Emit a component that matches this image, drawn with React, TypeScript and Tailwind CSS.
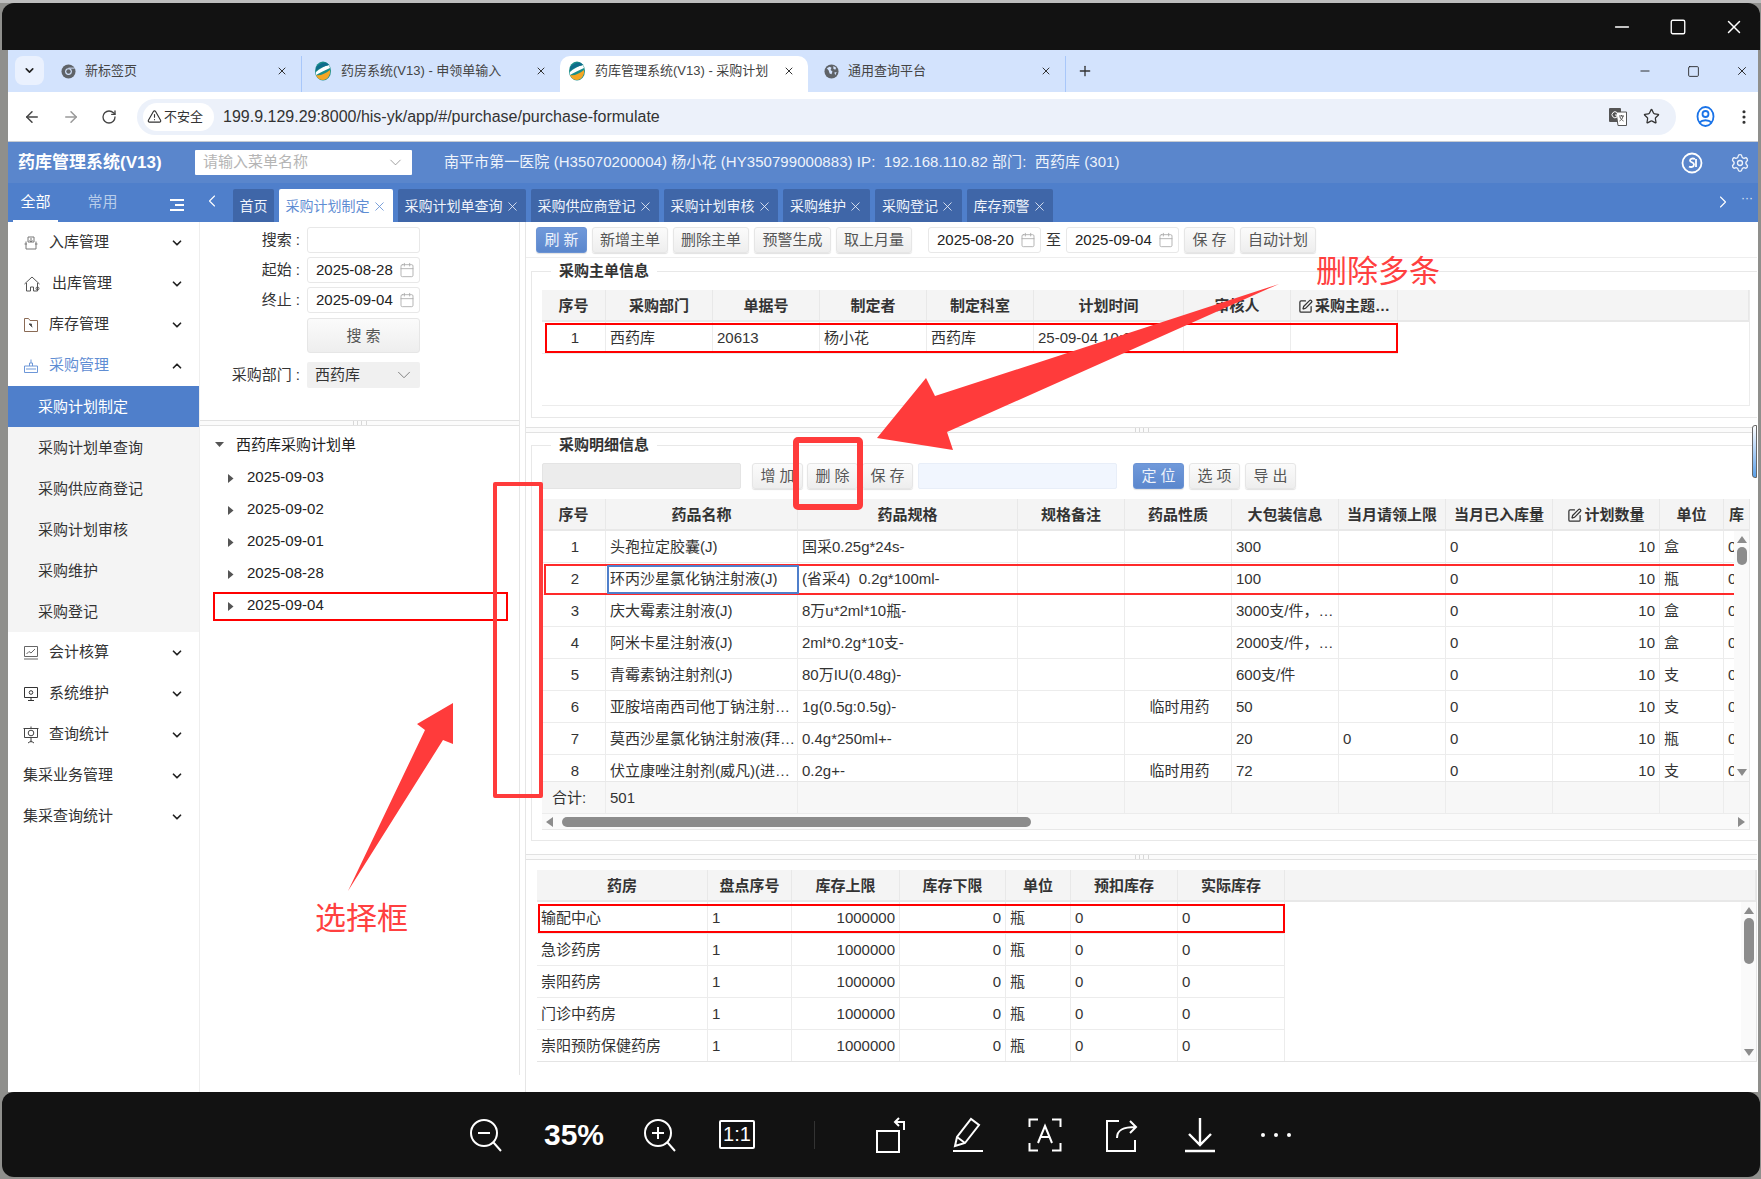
import React from "react";
import {
  ArrowLeft, ArrowRight, RotateCw, TriangleAlert, Star, EllipsisVertical, ChevronDown, ChevronUp,
  ChevronLeft, ChevronRight, Settings, Calendar, SquarePen, X, Plus, Minus, Square,
} from "lucide-react";

const Cal = () => <Calendar size={16} strokeWidth={1.3} className="text-[#aaa] shrink-0" />;

function ChromeIcon() {
  return (
    <svg width="15" height="15" viewBox="0 0 16 16" className="shrink-0">
      <circle cx="8" cy="8" r="7.5" fill="#5f6368" />
      <circle cx="8" cy="8" r="3.6" fill="#d3e3fd" />
      <circle cx="8" cy="8" r="2.4" fill="#5f6368" />
      <path d="M8 4.4h6.6" stroke="#d3e3fd" strokeWidth="1" />
    </svg>
  );
}
function GlobeIcon() {
  return (
    <svg width="15" height="15" viewBox="0 0 16 16" className="shrink-0">
      <circle cx="8" cy="8" r="7.5" fill="#5f6368" />
      <path d="M3 4.5l3-1.5 2 1-1 2.5 2 1.5-1 3-2-1-1-3zM10 2l3 2-1 2-2-1zM11 9l2.5-.5-1.5 3.500z" fill="#d3e3fd" />
    </svg>
  );
}
function AppLogo() {
  return (
    <svg width="18" height="20" viewBox="0 0 18 20" className="shrink-0">
      <ellipse cx="9" cy="10" rx="8" ry="9.500" fill="#1b8e8a" />
      <path d="M2 14c4 1 9-1 14-5 1 5-3 10-7 10-3 0-6-2-7-5z" fill="#f5a623" />
      <path d="M2 11C5 8 11 5 15 4l1 3C11 9 6 12 2 14z" fill="#fff" />
      <path d="M2 7c2-4 7-6 11-5l2 2C10 5 5 7 2 10z" fill="#0f6d8c" />
    </svg>
  );
}

function Btn({ children, blue, w = "w-[51px]" }: { children: React.ReactNode; blue?: boolean; w?: string }) {
  return (
    <div
      className={`${w} h-[26px] shrink-0 rounded-[3px] border text-center leading-[24px] shadow-[0_1px_1px_rgba(0,0,0,0.12)] ${
        blue
          ? "bg-gradient-to-b from-[#7099da] to-[#5b87cd] border-[#6b93d4] text-[#eef3fb]"
          : "bg-gradient-to-b from-[#fbfbfb] to-[#eeeeee] border-[#e6e6e6] text-[#555]"
      }`}
    >
      {children}
    </div>
  );
}

function DateBox({ v, w = "w-[113px]" }: { v: string; w?: string }) {
  return (
    <div className={`${w} h-[26px] shrink-0 flex items-center justify-between pl-[8px] pr-[4px] border border-[#e8e8e8] rounded-[3px] text-[#222] bg-white`}>
      <span>{v}</span>
      <Cal />
    </div>
  );
}

function Divider() {
  return (
    <div className="h-[6px] border-y border-[#e2e2e2] bg-[#fbfbfb] flex justify-center">
      <div className="w-[14px] h-full border-x border-[#d8d8d8] flex justify-center">
        <div className="w-[5px] h-full border-x border-[#d8d8d8]" />
      </div>
    </div>
  );
}

/* ------ sidebar ------ */
const G = "#777";
const iconIn = (
  <svg width="16" height="16" viewBox="0 0 16 16" fill="none" stroke={G}>
    <path d="M3 6.500v7.500h10V6.500M5 2h6v5H5zM1.500 9H4M12 9h2.500M8 3v4M6.500 5.500 8 7l1.500-1.500" />
  </svg>
);
const iconOut = (
  <svg width="18" height="18" viewBox="0 0 18 18" fill="none" stroke="#555">
    <path d="M1.500 9 9 2l7.500 7M3.500 8v8h4v-4h3v4h4V8" />
    <circle cx="14.500" cy="13.500" r="1.500" />
  </svg>
);
const iconStock = (
  <svg width="16" height="16" viewBox="0 0 16 16" fill="none" stroke="#555">
    <path d="M1.500 1.500h4l1.500 2h7.500v11h-13z" stroke="#8a6a55" />
    <path d="M6 7l3.500 3M6 7h2.500v2.500z" fill="#333" />
  </svg>
);
const iconBuy = (
  <svg width="16" height="16" viewBox="0 0 16 16" fill="none" stroke="#6d97d8">
    <path d="M1.500 8h13v6.500h-13zM3 11h10M6.500 8V5h3v3M8 5V1.500" />
  </svg>
);
const iconAcc = (
  <svg width="16" height="16" viewBox="0 0 16 16" fill="none" stroke="#666">
    <path d="M1.500 1.500h13v10h-13zM1 14h14M3.500 9 6 6.500l2 1.500 4-4" />
  </svg>
);
const iconSys = (
  <svg width="16" height="16" viewBox="0 0 16 16" fill="none" stroke="#333">
    <path d="M1.500 1.500h13v10h-13zM5 14.500h6M8 11.500v3" />
    <circle cx="8" cy="6.500" r="1.800" />
  </svg>
);
const iconQry = (
  <svg width="16" height="18" viewBox="0 0 16 18" fill="none" stroke="#444">
    <path d="M.5 2.500h15M1.500 2.500v9h13v-9M8 .5v2M8 11.500v5M5 17l3-2 3 2" />
    <circle cx="8" cy="7" r="2.800" />
  </svg>
);

function MenuRow({ icon, label, open, blue, tx = "w-[19px]" }: { icon?: React.ReactNode; label: string; open?: boolean; blue?: boolean; tx?: string }) {
  return (
    <div className={`h-[41px] flex items-center pl-[15px] pr-[15px] ${blue ? "text-[#5f8dd3]" : "text-[#333]"}`}>
      {icon && <div className={`${tx} shrink-0`}>{icon}</div>}
      {icon && <div className="w-[7px] shrink-0" />}
      <span className="flex-1">{label}</span>
      {open ? <ChevronUp size={14} strokeWidth={3} className="text-[#222]" /> : <ChevronDown size={14} strokeWidth={3} className="text-[#222]" />}
    </div>
  );
}

function Sidebar() {
  const subs = ["采购计划单查询", "采购供应商登记", "采购计划审核", "采购维护", "采购登记"];
  return (
    <div className="w-[192px] shrink-0 border-r border-[#eeeeee] bg-white">
      <MenuRow icon={iconIn} label="入库管理" />
      <MenuRow icon={iconOut} label="出库管理" tx="w-[22px]" />
      <MenuRow icon={iconStock} label="库存管理" />
      <MenuRow icon={iconBuy} label="采购管理" open blue />
      <div className="h-[41px] pl-[30px] leading-[41px] bg-[#4f7fcb] text-white">采购计划制定</div>
      <div className="bg-[#f4f4f4]">
        {subs.map((s) => (
          <div key={s} className="h-[41px] pl-[30px] leading-[41px] text-[#333]">{s}</div>
        ))}
      </div>
      <MenuRow icon={iconAcc} label="会计核算" />
      <MenuRow icon={iconSys} label="系统维护" />
      <MenuRow icon={iconQry} label="查询统计" />
      <MenuRow label="集采业务管理" />
      <MenuRow label="集采查询统计" />
    </div>
  );
}

/* ------ middle ------ */
function FormRow({ label, children }: { label: string; children: React.ReactNode }) {
  return (
    <div className="flex items-center h-[26px]">
      <div className="w-[100px] text-right text-[#333] shrink-0">{label}</div>
      <div className="ml-[7px]">{children}</div>
    </div>
  );
}
function TreeRow({ date }: { date: string }) {
  return (
    <div className="h-[32px] flex items-center pl-[28px]">
      <svg width="6" height="9" viewBox="0 0 6 9" className="shrink-0 mt-[2px]"><path d="M0 0l5.500 4.500L0 9z" fill="#555" /></svg>
      <span className="ml-[13px] text-[#222]">{date}</span>
    </div>
  );
}
function Middle() {
  return (
    <div className="w-[320px] shrink-0 border-r border-[#e6e6e6] h-[853px] flex flex-col">
      <div className="h-[198px] pt-[5px] flex flex-col gap-[4px]">
        <FormRow label="搜索 :"><div className="w-[113px] h-[26px] border border-[#e8e8e8] rounded-[3px]" /></FormRow>
        <FormRow label="起始 :"><DateBox v="2025-08-28" /></FormRow>
        <FormRow label="终止 :"><DateBox v="2025-09-04" /></FormRow>
        <div className="pl-[107px] pt-[1px]">
          <div className="w-[113px] h-[35px] rounded-[3px] border border-[#e6e6e6] bg-gradient-to-b from-[#fbfbfb] to-[#eeeeee] text-center leading-[33px] text-[#555]">搜 索</div>
        </div>
        <div className="mt-[5px]">
          <FormRow label="采购部门 :">
            <div className="w-[113px] h-[26px] bg-[#f0f0f0] rounded-[2px] flex items-center justify-between pl-[8px] pr-[5px] text-[#333]">
              <span>西药库</span>
              <ChevronDown size={22} strokeWidth={1} className="text-[#777]" />
            </div>
          </FormRow>
        </div>
      </div>
      <Divider />
      <div className="pt-[3px]">
        <div className="h-[32px] flex items-center pl-[15px]">
          <svg width="9" height="6" viewBox="0 0 9 6" className="shrink-0"><path d="M0 0h9L4.500 5z" fill="#555" /></svg>
          <span className="ml-[12px] text-[#222]">西药库采购计划单</span>
        </div>
        {["2025-09-03", "2025-09-02", "2025-09-01", "2025-08-28", "2025-09-04"].map((d) => (
          <TreeRow key={d} date={d} />
        ))}
      </div>
    </div>
  );
}

/* ------ tables ------ */
const C = "text-center pr-[1px]";
const L = "pr-[1px]";
const R = "text-right pr-[4px]";
const cell = "truncate h-[32px] leading-[31px] pl-[4px] border-r border-b border-[#ececec] text-[#333]";
const head = "truncate h-[32px] leading-[31px] px-[2px] border-r border-b-2 border-[#e8e8e8] text-center font-bold text-[#333] bg-[#f4f4f4]";

function Head({ cols }: { cols: React.ReactNode[] }) {
  return <>{cols.map((c, i) => <div key={i} className={head}>{c}</div>)}</>;
}
function Row({ vals, al }: { vals: string[]; al: string[] }) {
  return <>{vals.map((v, i) => <div key={i} className={`${cell} ${al[i]}`}>{v}</div>)}</>;
}
const Edit = () => <SquarePen size={15} strokeWidth={2} className="inline-block mr-[2px] -mt-[2px]" />;

const t2 = [
  ["1", "头孢拉定胶囊(J)", "国采0.25g*24s-", "", "", "300", "", "0", "10", "盒", "0"],
  ["2", "环丙沙星氯化钠注射液(J)", "(省采4)\u00a0\u00a00.2g*100ml-", "", "", "100", "", "0", "10", "瓶", "0"],
  ["3", "庆大霉素注射液(J)", "8万u*2ml*10瓶-", "", "", "3000支/件，…", "", "0", "10", "盒", "0"],
  ["4", "阿米卡星注射液(J)", "2ml*0.2g*10支-", "", "", "2000支/件，…", "", "0", "10", "盒", "0"],
  ["5", "青霉素钠注射剂(J)", "80万IU(0.48g)-", "", "", "600支/件", "", "0", "10", "支", "0"],
  ["6", "亚胺培南西司他丁钠注射…", "1g(0.5g:0.5g)-", "", "临时用药", "50", "", "0", "10", "支", "0"],
  ["7", "莫西沙星氯化钠注射液(拜…", "0.4g*250ml+-", "", "", "20", "0", "0", "10", "瓶", "0"],
  ["8", "伏立康唑注射剂(威凡)(进…", "0.2g+-", "", "临时用药", "72", "", "0", "10", "支", "0"],
];
const t2al = [C, L, L, L, C, L, L, L, R, L, L];
const t3 = ["输配中心", "急诊药房", "崇阳药房", "门诊中药房", "崇阳预防保健药房"];
const t3al = [L, L, R, R, L, L, L];

function VBar({ pos, thumb }: { pos: string; thumb: string }) {
  return (
    <div className={`absolute top-0 bottom-0 ${pos} w-[15px] bg-[#fafafa] flex flex-col items-center`}>
      <svg width="10" height="7" viewBox="0 0 10 7" className="mt-[5px] shrink-0"><path d="M0 7 5 0l5 7z" fill="#8c8c8c" /></svg>
      <div className={`w-[10px] mt-[4px] rounded-[5px] bg-[#8c8c8c] ${thumb}`} />
      <svg width="10" height="7" viewBox="0 0 10 7" className="mt-auto mb-[5px] shrink-0"><path d="M0 0l5 7 5-7z" fill="#8c8c8c" /></svg>
    </div>
  );
}

function Right() {
  return (
    <div className="w-[1232px] shrink-0 ml-[5px] border-l border-[#e6e6e6] h-[870px] overflow-hidden">
      <div className="h-[36px] pt-[5px] pl-[10px] flex items-start border-b border-[#eeeeee] gap-[5px]">
        <Btn blue>刷 新</Btn>
        <Btn w="w-[76px]">新增主单</Btn>
        <Btn w="w-[76px]">删除主单</Btn>
        <Btn w="w-[77px]">预警生成</Btn>
        <Btn w="w-[76px]">取上月量</Btn>
        <div className="ml-[11px]"><DateBox v="2025-08-20" /></div>
        <span className="text-[#333] leading-[26px]">至</span>
        <DateBox v="2025-09-04" />
        <Btn>保 存</Btn>
        <Btn w="w-[76px]">自动计划</Btn>
      </div>

      <fieldset className="ml-[5px] mt-[2px] w-[1227px] h-[158px] border border-r-0 border-[#e8e8e8] pl-[10px]">
        <legend className="ml-[9px] px-[8px] font-bold text-[#333] leading-[22px]">采购主单信息</legend>
        <div className="mt-[8px] w-[1208px] h-[116px] border-b border-r border-[#ececec]">
          <div className="grid grid-cols-[64px_107px_107px_107px_107px_150px_107px_107px_1fr]">
            <Head cols={["序号", "采购部门", "单据号", "制定者", "制定科室", "计划时间", "审核人", <span key="e"><Edit />采购主题…</span>, ""]} />
            <Row vals={["1", "西药库", "20613", "杨小花", "西药库", "25-09-04 10:00", "", ""]} al={[C, L, L, L, L, L, L, L]} />
          </div>
        </div>
      </fieldset>

      <div className="mt-[9px]"><Divider /></div>

      <fieldset className="ml-[5px] mt-[1px] w-[1227px] h-[407px] border border-r-0 border-[#e8e8e8] pl-[10px]">
        <legend className="ml-[9px] px-[8px] font-bold text-[#333] leading-[22px]">采购明细信息</legend>
        <div className="mt-[7px] flex items-start">
          <div className="w-[199px] h-[26px] bg-[#ececec] border border-[#e4e4e4] rounded-[2px]" />
          <div className="ml-[11px]"><Btn>增 加</Btn></div>
          <div className="ml-[4px]"><Btn>删 除</Btn></div>
          <div className="ml-[4px]"><Btn>保 存</Btn></div>
          <div className="ml-[5px] w-[199px] h-[26px] bg-[#f1f6fe] border border-[#e8eef8] rounded-[2px]" />
          <div className="ml-[16px]"><Btn blue>定 位</Btn></div>
          <div className="ml-[5px]"><Btn>选 项</Btn></div>
          <div className="ml-[5px]"><Btn>导 出</Btn></div>
        </div>
        <div className="mt-[10px] w-[1208px] border-b border-r border-[#e8e8e8] overflow-hidden">
          <div className="grid grid-cols-[64px_192px_220px_107px_107px_107px_107px_107px_107px_64px_26px]">
            <Head cols={["序号", "药品名称", "药品规格", "规格备注", "药品性质", "大包装信息", "当月请领上限", "当月已入库量", <span key="p"><Edit />计划数量</span>, "单位", "库"]} />
          </div>
          <div className="relative h-[250px] overflow-hidden">
            <div className="grid grid-cols-[64px_192px_220px_107px_107px_107px_107px_107px_107px_64px_26px]">
              {t2.map((r, i) => <Row key={i} vals={r} al={t2al} />)}
            </div>
            <VBar pos="right-0" thumb="h-[18px]" />
          </div>
          <div className="grid grid-cols-[64px_192px_220px_107px_107px_107px_107px_107px_107px_64px_26px] bg-[#f7f7f7] border-t border-[#e8e8e8]">
            <div className={`${cell} pl-[10px]`}>合计:</div>
            <div className={cell}>501</div>
            {[0, 1, 2, 3, 4, 5, 6, 7, 8].map((i) => <div key={i} className={cell} />)}
          </div>
          <div className="h-[15px] bg-[#fafafa] flex items-center px-[4px]">
            <svg width="7" height="10" viewBox="0 0 7 10" className="shrink-0"><path d="M7 0 0 5l7 5z" fill="#8c8c8c" /></svg>
            <div className="ml-[9px] w-[469px] h-[10px] rounded-[5px] bg-[#8c8c8c]" />
            <svg width="7" height="10" viewBox="0 0 7 10" className="ml-auto shrink-0"><path d="M0 0l7 5-7 5z" fill="#8c8c8c" /></svg>
          </div>
        </div>
      </fieldset>

      <div className="mt-[13px]"><Divider /></div>

      <div className="ml-[11px] mt-[10px] w-[1220px] border-b border-r border-[#e4e4e4]">
        <div className="grid grid-cols-[171px_84px_108px_106px_65px_107px_107px_1fr]">
          <Head cols={["药房", "盘点序号", "库存上限", "库存下限", "单位", "预扣库存", "实际库存", ""]} />
        </div>
        <div className="relative h-[159px] overflow-hidden">
          <div className="grid grid-cols-[171px_84px_108px_106px_65px_107px_107px]">
            {t3.map((n) => <Row key={n} vals={[n, "1", "1000000", "0", "瓶", "0", "0"]} al={t3al} />)}
          </div>
          <VBar pos="right-0" thumb="h-[46px]" />
        </div>
      </div>
    </div>
  );
}

/* ------ chrome ------ */
function BrowserTab({ w, pl = "pl-[10px]", icon, title, active, sep }: { w: string; pl?: string; icon: React.ReactNode; title: string; active?: boolean; sep?: boolean }) {
  return (
    <div className={`${w} h-[36px] shrink-0 flex items-center ${pl} pr-[13px] pb-[6px] text-[13px] text-[#444] ${active ? "bg-white rounded-t-[10px] text-[#333]" : ""} ${sep ? "border-r border-[#a8c7fa]" : ""}`}>
      {icon}
      <span className="ml-[9px] flex-1 whitespace-nowrap">{title}</span>
      <X size={12} strokeWidth={2} className="text-[#333] shrink-0 ml-[4px]" />
    </div>
  );
}

function AppTab({ w, label, active, close = true }: { w: string; label: string; active?: boolean; close?: boolean }) {
  return (
    <div className={`${w} h-[33px] shrink-0 flex items-center justify-center pt-[1px] text-[14px] rounded-t-[2px] ${active ? "bg-white text-[#5f8dd3]" : "bg-[#3f66a8] text-[#f0f4fb]"}`}>
      <span>{label}</span>
      {close && <X size={15} strokeWidth={1.3} className="ml-[2px]" />}
    </div>
  );
}

/* ------ viewer bottom bar ------ */
const vb = { fill: "none", stroke: "#fff", strokeWidth: 2 };
function ToolCell({ w, children }: { w: string; children: React.ReactNode }) {
  return <div className={`${w} shrink-0 flex justify-center items-center`}>{children}</div>;
}
function BottomBar() {
  return (
    <div className="h-[85px] ml-[2px] mr-[1px] bg-[#121212] rounded-[12px] flex items-center pl-[440px] shrink-0">
      <ToolCell w="w-[88px]">
        <svg width="34" height="34" viewBox="0 0 34 34" {...vb}><circle cx="15" cy="15" r="13" /><path d="M9 15h12M24.500 24.500 32 33" /></svg>
      </ToolCell>
      <ToolCell w="w-[88px]"><span className="text-white font-bold text-[30px] leading-none">35%</span></ToolCell>
      <ToolCell w="w-[84px]">
        <svg width="34" height="34" viewBox="0 0 34 34" {...vb}><circle cx="15" cy="15" r="13" /><path d="M9 15h12M15 9v12M24.500 24.500 32 33" /></svg>
      </ToolCell>
      <ToolCell w="w-[70px]">
        <div className="w-[36px] h-[29px] border-2 border-white rounded-[2px] text-white text-[20px] leading-[25px] text-center">1:1</div>
      </ToolCell>
      <ToolCell w="w-[84px]"><div className="w-px h-[28px] bg-[#333]" /></ToolCell>
      <ToolCell w="w-[68px]">
        <svg width="34" height="36" viewBox="0 0 34 36" {...vb}><path d="M4 14h22v21H4zM31 13V5h-9M26 1l-4 4 4 4" /></svg>
      </ToolCell>
      <ToolCell w="w-[88px]">
        <svg width="34" height="36" viewBox="0 0 34 36" {...vb}><path d="M4 29l2-9L20 2l8 6-14 18zM6 20l8 6M2 34h30" /></svg>
      </ToolCell>
      <ToolCell w="w-[66px]">
        <svg width="34" height="34" viewBox="0 0 34 34" {...vb}><path d="M1.500 9V1.500H10M24 1.500h8.500V9M1.500 25v7.500H10M24 32.500h8.500V25M10 25l7-17 7 17M12.500 19h9" /></svg>
      </ToolCell>
      <ToolCell w="w-[88px]">
        <svg width="34" height="34" viewBox="0 0 34 34" {...vb}><path d="M14 3H2v30h28V22M12 20c0-8 6-11 19-11M25 3l6 6-6 6" /></svg>
      </ToolCell>
      <ToolCell w="w-[68px]">
        <svg width="34" height="36" viewBox="0 0 34 36" {...vb}><path d="M17 1v27M6 17l11 11 11-11M2 34h30" strokeWidth="2.400" /></svg>
      </ToolCell>
      <ToolCell w="w-[84px]">
        <div className="flex gap-[9px]">
          <div className="w-[4px] h-[4px] rounded-full bg-white" />
          <div className="w-[4px] h-[4px] rounded-full bg-white" />
          <div className="w-[4px] h-[4px] rounded-full bg-white" />
        </div>
      </ToolCell>
    </div>
  );
}

/* ------ annotations ------ */
function Annotations() {
  return (
    <>
      <div className="absolute left-[545px] top-[323px] w-[853px] h-[30px] border-2 border-[#ff0000]" />
      <div className="absolute left-[544px] top-[564px] w-[1190px] h-[31px] border-y-2 border-l-2 border-[#ff2a2a]" />
      <div className="absolute left-[607px] top-[565px] w-[192px] h-[29px] border-2 border-[#4f7fcb]" />
      <div className="absolute left-[538px] top-[904px] w-[747px] h-[29px] border-2 border-[#ff0000]" />
      <div className="absolute left-[213px] top-[592px] w-[295px] h-[29px] border-2 border-[#ff0000]" />
      <div className="absolute left-[493px] top-[482px] w-[50px] h-[316px] border-[4px] border-[#ff3b3b] rounded-[2px]" />
      <div className="absolute left-[793px] top-[437px] w-[70px] h-[73px] border-[6px] border-[#ff3b3b] rounded-[5px]" />
      <svg className="absolute left-0 top-0 pointer-events-none" width="1761" height="1179" viewBox="0 0 1761 1179">
        <polygon points="877,438 926,378 935,396 1279,284 947,432 953,450" fill="#ff3b3b" />
        <polygon points="453,703 417,724 425,730 348,891 443,740 453,744" fill="#ff3b3b" />
      </svg>
      <div className="absolute left-[1316px] top-[254px] text-[31px] leading-[36px] text-[#ff4040] whitespace-nowrap">删除多条</div>
      <div className="absolute left-[315px] top-[901px] text-[31px] leading-[36px] text-[#ff4040] whitespace-nowrap">选择框</div>
      <div className="absolute left-[1752px] top-[425px] w-[5px] h-[53px] rounded-l-[3px] border border-[#666] bg-gradient-to-b from-white to-[#5aa0e8]" />
    </>
  );
}

export default function App() {
  return (
    <div className="relative w-[1761px] h-[1179px] overflow-hidden bg-[#8f8f8c] text-[15px] font-['Liberation_Sans','Noto_Sans_CJK_SC',sans-serif] flex flex-col">
      <div className="h-[3px] bg-[#bdbdbd] shrink-0" />
      <div className="h-[47px] ml-[2px] mr-[1px] shrink-0 bg-[#121212] rounded-t-[12px] flex items-center justify-end pr-[15px] gap-[34px] text-white">
        <Minus size={22} strokeWidth={1.6} />
        <Square size={18} strokeWidth={1.8} className="mx-[2px]" />
        <X size={22} strokeWidth={1.6} />
      </div>

      <div className="ml-[8px] w-[1750px] h-[1042px] shrink-0 bg-white flex flex-col">
        {/* tab strip */}
        <div className="h-[42px] bg-[#d3e3fd] flex items-end shrink-0">
          <div className="w-[42px] h-full shrink-0 pl-[7px] pt-[6px]">
            <div className="w-[29px] h-[29px] bg-[#eaf1fe] rounded-[8px] flex items-center justify-center">
              <ChevronDown size={13} strokeWidth={3} className="text-[#222]" />
            </div>
          </div>
          <BrowserTab w="w-[252px]" pl="pl-[11px]" icon={<ChromeIcon />} title="新标签页" sep />
          <BrowserTab w="w-[258px]" pl="pl-[12px]" icon={<AppLogo />} title="药房系统(V13) - 申领单输入" />
          <BrowserTab w="w-[248px]" pl="pl-[8px]" icon={<AppLogo />} title="药库管理系统(V13) - 采购计划" active />
          <BrowserTab w="w-[258px]" pl="pl-[16px]" icon={<GlobeIcon />} title="通用查询平台" sep />
          <div className="h-[36px] flex items-center pl-[11px] pb-[6px]"><Plus size={16} strokeWidth={2} className="text-[#333]" /></div>
          <div className="ml-auto h-full flex items-center pr-[9px] gap-[35px] text-[#222]">
            <Minus size={14} strokeWidth={1.6} />
            <Square size={13} strokeWidth={1.6} />
            <X size={14} strokeWidth={1.6} />
          </div>
        </div>

        {/* address bar */}
        <div className="h-[50px] shrink-0 flex items-center border-b border-[#c8ccd2] text-[#444]">
          <div className="w-[129px] shrink-0 flex items-center pl-[15px] gap-[21px]">
            <ArrowLeft size={18} strokeWidth={2} />
            <ArrowRight size={18} strokeWidth={2} className="text-[#999]" />
            <RotateCw size={16} strokeWidth={2} />
          </div>
          <div className="w-[1539px] h-[36px] shrink-0 rounded-full bg-[#ecf1fa] flex items-center pl-[6px] pr-[16px]">
            <div className="w-[71px] h-[28px] rounded-full bg-white flex items-center pl-[4px] text-[13px] text-[#333]">
              <TriangleAlert size={15} strokeWidth={1.8} className="mr-[2px]" />不安全
            </div>
            <span className="ml-[9px] text-[16px] text-[#333] whitespace-nowrap flex-1">199.9.129.29:8000/his-yk/app/#/purchase/purchase-formulate</span>
            <svg width="20" height="20" viewBox="0 0 20 20" className="shrink-0">
              <rect x="1" y="1" width="12" height="14" rx="1" fill="#555" />
              <path d="M8 5h10.500v13.500H10z" fill="#fff" stroke="#555" />
              <path d="M11 9h5M13.500 8v1M15 9c-.5 3-2 4-3.500 5M12 10c.5 2 2 3 3.500 4" stroke="#555" fill="none" />
              <path d="M9 5.500A3 3 0 1 0 9 10V8H7" stroke="#fff" fill="none" />
            </svg>
            <Star size={17} strokeWidth={1.8} className="ml-[15px] text-[#333]" />
          </div>
          <div className="ml-[20px] flex items-center">
            <svg width="19" height="21" viewBox="0 0 19 21" fill="none" stroke="#1a73e8" strokeWidth="1.800">
              <ellipse cx="9.500" cy="10.500" rx="8" ry="9.500" />
              <circle cx="9.500" cy="8" r="3" />
              <path d="M3.500 16.500c3-3 9-3 12 0" />
            </svg>
            <EllipsisVertical size={18} strokeWidth={2.200} className="ml-[20px] text-[#333]" />
          </div>
        </div>

        {/* app header */}
        <div className="h-[41px] shrink-0 bg-[#5a86cc] flex items-center text-[#eef3fb]">
          <div className="w-[187px] shrink-0 pl-[10px] font-bold text-[17px] text-white whitespace-nowrap">药库管理系统(V13)</div>
          <div className="w-[217px] h-[25px] shrink-0 bg-white rounded-[1px] flex items-center justify-between pl-[8px] pr-[7px] text-[#b5b5b5]">
            <span>请输入菜单名称</span>
            <ChevronDown size={19} strokeWidth={1} className="text-[#888]" />
          </div>
          <span className="ml-[32px] whitespace-nowrap tracking-[0.06px]">南平市第一医院 (H35070200004) 杨小花 (HY350799000883) IP:&nbsp; 192.168.110.82 部门:&nbsp; 西药库 (301)</span>
          <div className="ml-auto flex items-center pr-[8px] gap-[27px]">
            <svg width="22" height="22" viewBox="0 0 22 22" fill="none" stroke="#fff" strokeWidth="1.800">
              <circle cx="11" cy="11" r="9.500" />
              <path d="M14 7c-2-1-5-.5-5 1.500S13 10 13 12.500 9.500 15.500 8 14.500M15 7v8" />
            </svg>
            <Settings size={20} strokeWidth={1.6} />
          </div>
        </div>

        {/* nav + tabs */}
        <div className="h-[39px] shrink-0 bg-[#4f7fcb] flex items-end">
          <div className="w-[192px] shrink-0 h-full flex">
            <div className="ml-[5px] w-[45px] h-full border-b-2 border-white text-white text-center leading-[37px]">全部</div>
            <div className="ml-[22px] w-[45px] text-[#b9cdea] text-center leading-[37px]">常用</div>
            <div className="ml-[45px] h-full pb-[-1px] flex flex-col justify-center gap-[3px] w-[14px] pt-[5px]">
              <div className="h-[2px] bg-white w-full" />
              <div className="h-[2px] bg-white w-[9px] ml-[5px]" />
              <div className="h-[2px] bg-white w-full" />
            </div>
          </div>
          <div className="w-[33px] shrink-0 h-full flex items-start pt-[8px] pl-[2px] text-white"><ChevronLeft size={20} strokeWidth={1.3} /></div>
          <div className="flex gap-[5px]">
            <AppTab w="w-[41px]" label="首页" close={false} />
            <AppTab w="w-[114px]" label="采购计划制定" active />
            <AppTab w="w-[128px]" label="采购计划单查询" />
            <AppTab w="w-[128px]" label="采购供应商登记" />
            <AppTab w="w-[114px]" label="采购计划审核" />
            <AppTab w="w-[87px]" label="采购维护" />
            <AppTab w="w-[87px]" label="采购登记" />
            <AppTab w="w-[86px]" label="库存预警" />
          </div>
          <div className="ml-auto h-full flex items-start pt-[9px] pr-[5px] text-white">
            <ChevronRight size={20} strokeWidth={1.3} />
            <span className="ml-[8px] text-[12px] leading-[12px] text-[#dfe8f6]">···</span>
          </div>
        </div>

        {/* body */}
        <div className="h-[870px] shrink-0 flex overflow-hidden">
          <Sidebar />
          <Middle />
          <Right />
        </div>
      </div>

      <BottomBar />
      <Annotations />
    </div>
  );
}
